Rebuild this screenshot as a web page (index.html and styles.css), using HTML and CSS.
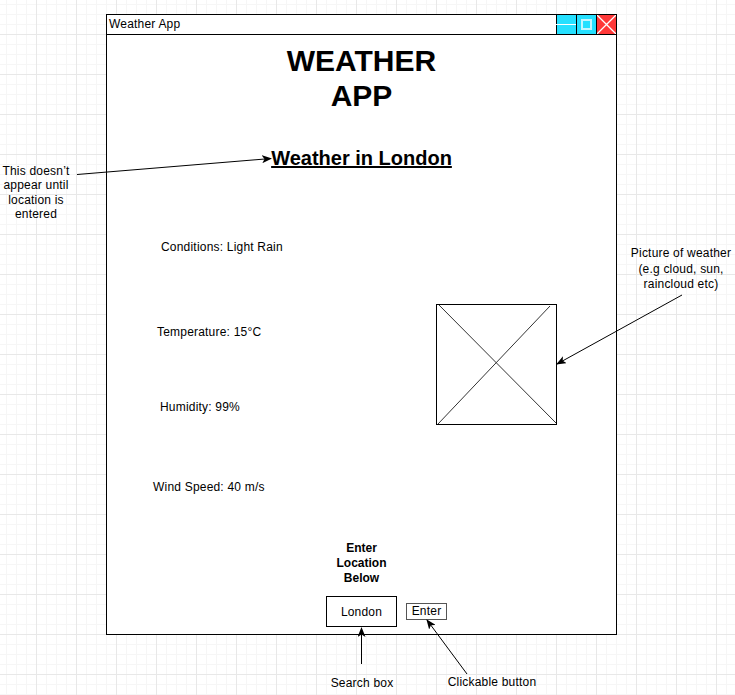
FILE: index.html
```html
<!DOCTYPE html>
<html>

<head>
    <title>Weather App Wireframe</title>
    <link rel="stylesheet" href="styles.css">
</head>

<body>
    <div class="canvas">
        <div class="window">
            <div class="titlebar">
                <span class="title">Weather App</span>
                <span class="win-btn btn-min"></span>
                <span class="win-btn btn-max"><span class="max-box"></span></span>
                <span class="win-btn btn-close">
                    <svg width="19" height="19" viewBox="0 0 19 19">
                        <path d="M0 0 L19 19 M19 0 L0 19" stroke="#ffffff" stroke-width="1.3" />
                    </svg>
                </span>
            </div>
            <div class="window-body">
                <h1 class="app-title">WEATHER<br />APP</h1>
                <h2 class="location-title">Weather in London</h2>
                <div class="weather-main">
                    <div class="details">
                        <p class="detail detail-conditions">Conditions: Light Rain</p>
                        <p class="detail detail-temp">Temperature: 15°C</p>
                        <p class="detail detail-humidity">Humidity: 99%</p>
                        <p class="detail detail-wind">Wind Speed: 40 m/s</p>
                    </div>
                    <div class="picture">
                        <svg width="120" height="120" viewBox="0 0 120 120">
                            <path d="M2 0 L119 118 M113 1 L1 119" stroke="#333333" stroke-width="1" fill="none" />
                        </svg>
                    </div>
                </div>
                <div class="search">
                    <p class="search-label">Enter Location Below</p>
                    <div class="search-row">
                        <div class="search-box">London</div>
                        <button class="enter-btn">Enter</button>
                    </div>
                </div>
            </div>
        </div>

        <p class="note note-heading">This doesn’t appear until location is entered</p>
        <p class="note note-picture">Picture of weather (e.g cloud, sun, raincloud etc)</p>
        <p class="note note-search">Search box</p>
        <p class="note note-button">Clickable button</p>

        <!-- arrows between notes and the mockup -->
        <svg class="arrows" width="735" height="695" viewBox="0 0 735 695">
            <defs>
                <marker id="head" markerWidth="10" markerHeight="8" refX="9" refY="4" orient="auto" markerUnits="userSpaceOnUse">
                    <path d="M0 0 L10 4 L0 8 L2.5 4 Z" fill="#000000" />
                </marker>
            </defs>
            <g stroke="#000000" stroke-width="1" fill="none">
                <line x1="77" y1="174.5" x2="271" y2="158.5" marker-end="url(#head)" />
                <line x1="682" y1="295" x2="557" y2="364" marker-end="url(#head)" />
                <line x1="361.5" y1="664" x2="361.5" y2="628" marker-end="url(#head)" />
                <line x1="467" y1="674" x2="427" y2="620" marker-end="url(#head)" />
            </g>
        </svg>
    </div>
</body>

</html>
```

FILE: styles.css
```css
body {
    margin: 0;
    font-family: "Liberation Sans", Arial, sans-serif;
    font-size: 12px;
    letter-spacing: 0.2px;
    color: #000000;
}

p,
h1,
h2 {
    margin: 0;
}

/* draw.io style grid */
.canvas {
    position: relative;
    width: 735px;
    height: 695px;
    overflow: hidden;
    background-color: #ffffff;
    background-image:
        linear-gradient(to right, #e8e8e8 1px, transparent 1px),
        linear-gradient(to bottom, #e8e8e8 1px, transparent 1px),
        linear-gradient(to right, #f6f6f6 1px, transparent 1px),
        linear-gradient(to bottom, #f6f6f6 1px, transparent 1px);
    background-size: 40px 40px, 40px 40px, 10px 10px, 10px 10px;
    background-position: 36px 34px, 36px 34px, 6px 4px, 6px 4px;
}

.window {
    position: absolute;
    left: 106px;
    top: 14px;
    width: 511px;
    height: 621px;
    box-sizing: border-box;
    border: 1px solid #000000;
    background-color: #ffffff;
    display: flex;
    flex-direction: column;
}

.titlebar {
    display: flex;
    align-items: stretch;
    height: 19px;
    border-bottom: 1px solid #000000;
}

.title {
    flex: 1;
    padding-left: 2px;
    line-height: 19px;
}

.win-btn {
    position: relative;
    width: 19px;
    border-left: 1px solid #000000;
    background-color: #25e0ff;
    display: flex;
    align-items: center;
    justify-content: center;
}

.btn-min::after {
    content: "";
    position: absolute;
    left: -1px;
    right: 0;
    top: 9px;
    height: 1px;
    background-color: #ffffff;
}

.max-box {
    width: 11px;
    height: 11px;
    box-sizing: border-box;
    border: 2px solid #c4f6ff;
}

.btn-close {
    background-color: #ff3838;
}

.btn-close svg {
    display: block;
}

.window-body {
    flex: 1;
    display: flex;
    flex-direction: column;
}

.app-title {
    margin-top: 8px;
    font-size: 30px;
    line-height: 35px;
    font-weight: 700;
    letter-spacing: 0;
    text-align: center;
}

.location-title {
    margin-top: 33px;
    font-size: 20px;
    line-height: 24px;
    font-weight: 700;
    letter-spacing: 0;
    text-align: center;
    text-decoration: underline;
}

.weather-main {
    display: flex;
    align-items: flex-start;
}

.details {
    width: 283px;
    padding: 70px 0 0 46px;
    display: grid;
    grid-template-rows: 85px 75px 80px 14px;
}

.detail {
    line-height: 14px;
}

.detail-conditions {
    margin-left: 8px;
}

.detail-temp {
    margin-left: 4px;
}

.detail-humidity {
    margin-left: 7px;
}

.picture {
    margin-top: 134px;
    width: 121px;
    height: 121px;
    box-sizing: border-box;
    border: 1px solid #000000;
}

.picture svg {
    display: block;
}

.search {
    margin-top: 47px;
    display: flex;
    flex-direction: column;
}

.search-label {
    align-self: center;
    width: 60px;
    font-weight: 700;
    letter-spacing: 0;
    line-height: 15px;
    text-align: center;
}

.search-row {
    margin: 10px 0 0 219px;
    display: flex;
    align-items: center;
    gap: 9px;
}

.search-box {
    width: 71px;
    height: 31px;
    box-sizing: border-box;
    border: 1px solid #000000;
    display: flex;
    align-items: center;
    justify-content: center;
}

.enter-btn {
    width: 41px;
    height: 17px;
    box-sizing: border-box;
    padding: 0;
    border: 1px solid #555555;
    background-color: #ffffff;
    font-family: "Liberation Sans", Arial, sans-serif;
    font-size: 12px;
    letter-spacing: 0.2px;
    color: #000000;
    line-height: 15px;
}

.note {
    position: absolute;
    line-height: 14.4px;
    text-align: center;
}

.note-heading {
    left: 0;
    top: 164px;
    width: 72px;
}

.note-picture {
    left: 626px;
    top: 246px;
    width: 110px;
    line-height: 15.5px;
}

.note-search {
    left: 322px;
    top: 676px;
    width: 80px;
}

.note-button {
    left: 442px;
    top: 675px;
    width: 100px;
}

.arrows {
    position: absolute;
    left: 0;
    top: 0;
    pointer-events: none;
}
```
